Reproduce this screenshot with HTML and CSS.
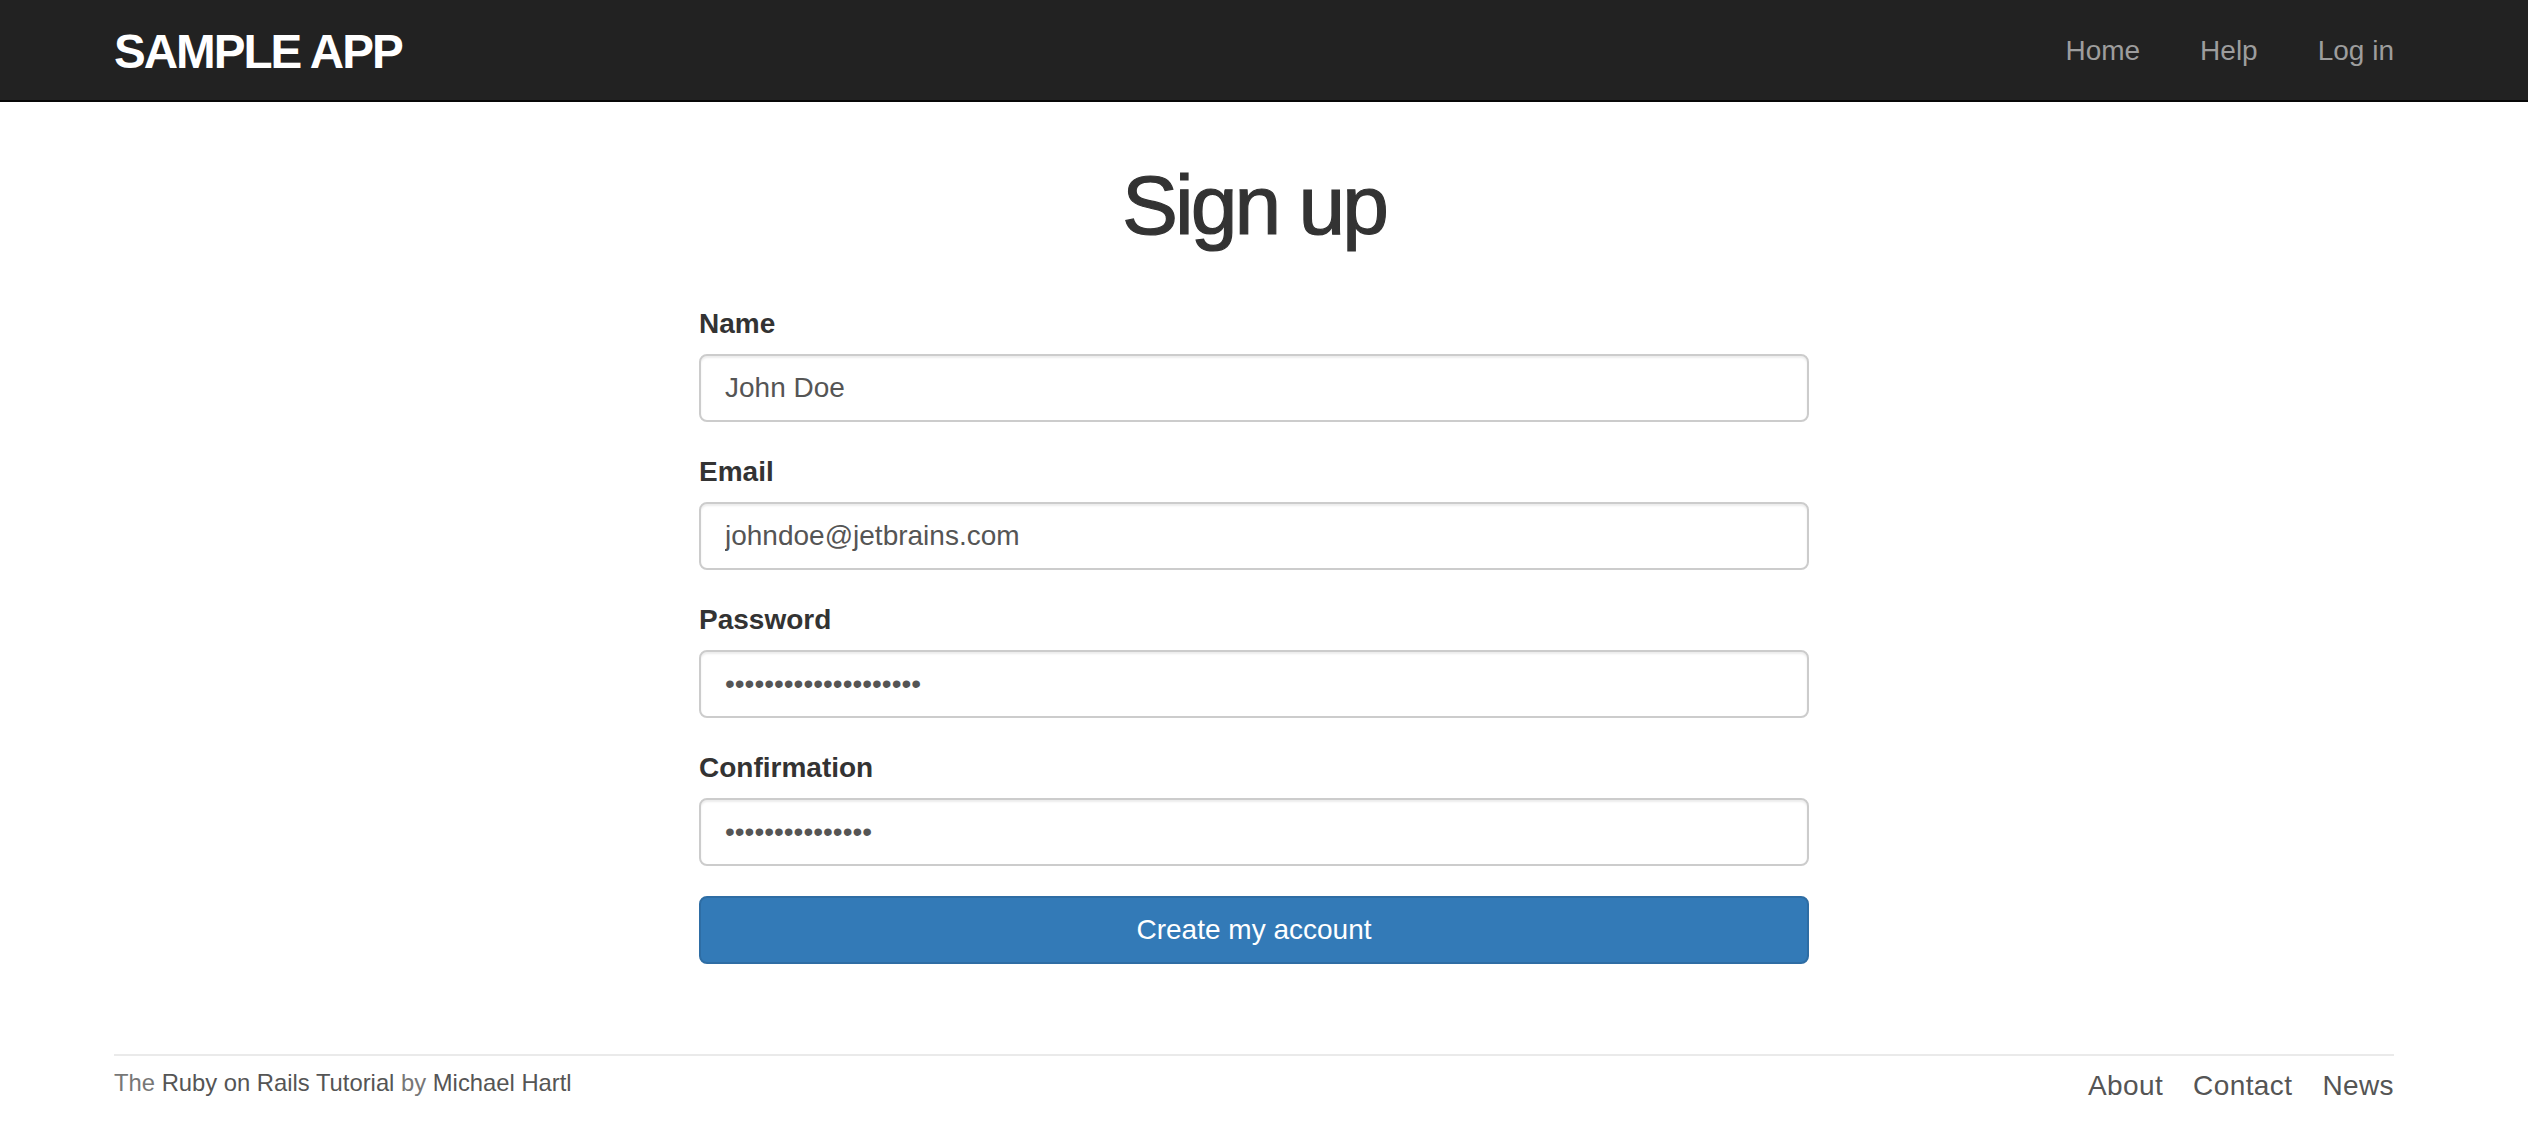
FILE: index.html
```html
<!DOCTYPE html>
<html lang="en">
<head>
    <meta charset="UTF-8">
    <meta name="viewport" content="width=device-width, initial-scale=1.0">
    <title>Sign up | Ruby on Rails Tutorial Sample App</title>
    <link rel="stylesheet" href="styles.css">
</head>
<body>
    <header class="navbar">
        <div class="container navbar-inner">
            <a href="#" id="logo">sample app</a>
            <nav>
                <ul class="nav">
                    <li><a href="#">Home</a></li>
                    <li><a href="#">Help</a></li>
                    <li><a href="#">Log in</a></li>
                </ul>
            </nav>
        </div>
    </header>

    <main class="page">
        <div class="container">
            <h1>Sign up</h1>

            <form class="signup-form" action="#" onsubmit="return false">
                <label for="user_name">Name</label>
                <input class="form-control" type="text" id="user_name" value="John Doe">

                <label for="user_email">Email</label>
                <input class="form-control" type="email" id="user_email" value="johndoe@jetbrains.com">

                <label for="user_password">Password</label>
                <input class="form-control" type="password" id="user_password" value="aaaaaaaaaaaaaaaaaaaa">

                <label for="user_password_confirmation">Confirmation</label>
                <input class="form-control" type="password" id="user_password_confirmation" value="aaaaaaaaaaaaaaa">

                <input class="btn btn-primary" type="submit" value="Create my account">
            </form>

            <footer class="footer">
                <small>
                    The <a href="#">Ruby on Rails Tutorial</a>
                    by <a href="#">Michael Hartl</a>
                </small>
                <ul>
                    <li><a href="#">About</a></li>
                    <li><a href="#">Contact</a></li>
                    <li><a href="#">News</a></li>
                </ul>
            </footer>
        </div>
    </main>
</body>
</html>
```

FILE: styles.css
```css
* {
    box-sizing: border-box;
}

body {
    margin: 0;
    font-family: "Liberation Sans", Arial, Helvetica, sans-serif;
    font-size: 28px;
    line-height: 40px;
    color: #333;
    background: #fff;
}

a {
    text-decoration: none;
}

.container {
    width: 2340px;
    padding: 0 30px;
    margin: 0 auto;
}

/* header */

.navbar {
    background: #222;
    border-bottom: 2px solid #080808;
    padding-right: 20px;
}

.navbar-inner {
    display: flex;
    justify-content: space-between;
    align-items: flex-start;
    height: 100px;
}

#logo {
    padding-top: 18px;
    font-size: 47.6px;
    line-height: 68px;
    font-weight: bold;
    color: #fff;
    text-transform: uppercase;
    letter-spacing: -2px;
}

.nav {
    display: flex;
    list-style: none;
    margin: 0 -30px 0 0;
    padding: 0;
}

.nav a {
    display: block;
    padding: 31px 30px 29px;
    line-height: 40px;
    color: #9d9d9d;
}

.nav a:hover {
    color: #fff;
}

/* sign up form */

.page {
    padding-top: 61px;
    padding-right: 20px;
}

h1 {
    margin: 0 0 57px;
    font-size: 84px;
    line-height: 1;
    font-weight: normal;
    letter-spacing: -3px;
    text-align: center;
    color: #333;
    -webkit-text-stroke: 1.2px #333;
}

.signup-form {
    width: 1110px;
    margin: 0 auto;
}

.signup-form label {
    display: block;
    margin-bottom: 10px;
    font-weight: bold;
}

.form-control {
    display: block;
    width: 100%;
    height: 68px;
    margin: 0 0 30px;
    padding: 12px 24px;
    font-family: inherit;
    font-size: 28px;
    line-height: 40px;
    color: #555;
    background: #fff;
    border: 2px solid #ccc;
    border-radius: 8px;
    box-shadow: inset 0 2px 2px rgba(0, 0, 0, 0.075);
    outline: none;
}

.btn {
    display: block;
    width: 100%;
    height: 68px;
    margin: 0;
    padding: 12px 24px;
    font-family: inherit;
    font-size: 28px;
    line-height: 40px;
    border-radius: 8px;
    cursor: pointer;
}

.btn-primary {
    color: #fff;
    background: #337ab7;
    border: 2px solid #2e6da4;
}

.btn-primary:hover {
    background: #286090;
}

/* footer */

.footer {
    display: flex;
    justify-content: space-between;
    align-items: flex-start;
    margin-top: 90px;
    padding-top: 10px;
    border-top: 2px solid #eaeaea;
    color: #777;
}

.footer small {
    font-size: 23.8px;
    line-height: 34px;
}

.footer a {
    color: #555;
}

.footer a:hover {
    color: #222;
}

.footer ul {
    display: flex;
    gap: 30px;
    list-style: none;
    margin: 0;
    padding: 0;
    letter-spacing: 0.4px;
}
```
